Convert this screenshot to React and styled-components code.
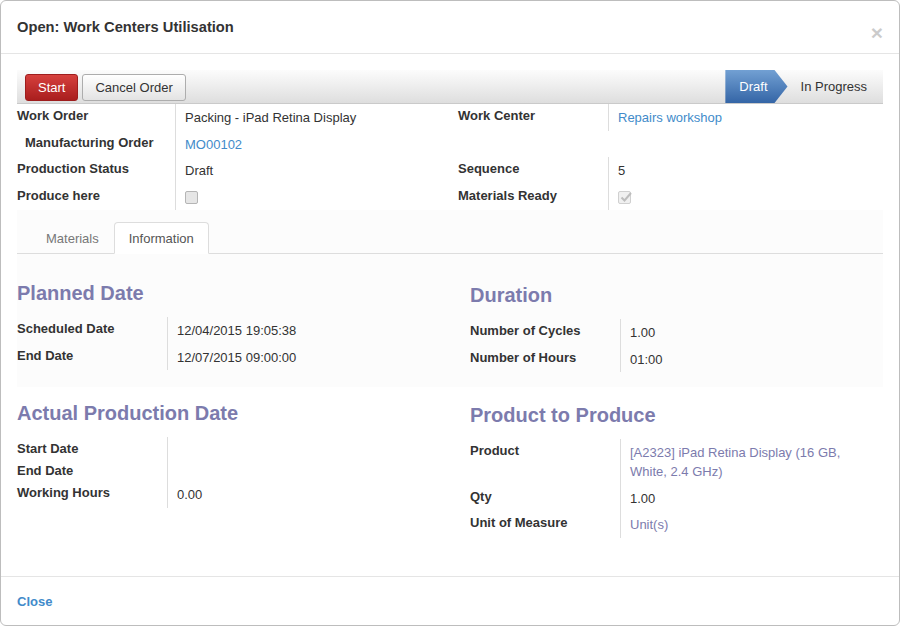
import React from 'react'
import styled, { createGlobalStyle } from 'styled-components'

const GlobalStyle = createGlobalStyle`
    html, body{
        margin:0;
        padding:0;
        background:#fff;
    }
    *{
        box-sizing:border-box;
    }
    body{
        font-family:"Liberation Sans", Arial, sans-serif;
        font-size:13px;
        line-height:1.42857;
        color:#333;
    }
`

const Modal = styled.div`
    display:flex;
    flex-direction:column;
    width:900px;
    height:626px;
    border:1px solid #bdbdbd;
    border-radius:6px;
    overflow:hidden;
    background:#fff;
`

const Header = styled.div`
    display:flex;
    align-items:center;
    justify-content:space-between;
    height:53px;
    padding:1px 16px 0;
    border-bottom:1px solid #e5e5e5;
    flex-shrink:0;
    .title{
        margin:0;
        font-size:14.7px;
        font-weight:bold;
        color:#333;
    }
    .close-x{
        margin-top:10px;
        font-size:21px;
        font-weight:bold;
        line-height:1;
        color:#000;
        opacity:0.2;
        cursor:pointer;
    }
`

const Body = styled.div`
    flex:1;
    padding:16px 16px 0 16px;
`

const StatusBar = styled.div`
    display:flex;
    align-items:center;
    justify-content:space-between;
    height:34px;
    padding:1px 0 0 8px;
    background:linear-gradient(to bottom, #fcfcfc, #dedede);
    border-bottom:1px solid #cacaca;
    .buttons{
        display:flex;
        gap:4px;
    }
    .steps{
        display:flex;
        align-self:stretch;
        height:33px;
        margin-top:-1px;
    }
`

const Button = styled.button`
    height:27px;
    padding:0 12px;
    font-family:inherit;
    font-size:13px;
    border-radius:3px;
    cursor:pointer;
    color:${p => p.$primary ? '#fff' : '#333'};
    border:1px solid ${p => p.$primary ? '#9e1d1d' : '#adadad'};
    background:${p => p.$primary
        ? 'linear-gradient(to bottom, #d6403d, #a91e1e)'
        : 'linear-gradient(to bottom, #ffffff, #e3e3e3)'};
`

const Step = styled.div`
    display:flex;
    align-items:center;
    height:100%;
    padding-top:2px;
    font-size:13px;
    ${p => p.$active ? `
        margin-left:2px;
        padding-left:14px;
        padding-right:20px;
        color:#fff;
        background:linear-gradient(to bottom, #72a0d3, #3465a6);
        clip-path:polygon(0 0, calc(100% - 13px) 0, 100% 50%, calc(100% - 13px) 100%, 0 100%);
    ` : `
        padding-left:13px;
        padding-right:16px;
        color:#333;
    `}
`

const FieldTable = styled.div`
    display:grid;
    grid-template-columns:${p => p.$cols};
    align-items:stretch;
`

const Label = styled.div`
    padding:3px 0 1px ${p => p.$indent ? '8px' : '0'};
    line-height:18px;
    font-weight:bold;
    color:#333;
`

const Value = styled.div`
    padding:5px 16px 3px 9px;
    border-left:1px solid ${p => p.$bare ? 'transparent' : '#dddddd'};
    color:#333;
    a{
        color:${p => p.$purple ? '#7c7bad' : '#428bca'};
        text-decoration:none;
    }
`

const Box = styled.span`
    display:inline-block;
    width:13px;
    height:13px;
    vertical-align:middle;
    margin-top:-2px;
    border:1px solid ${p => p.$checked ? '#d0d0d0' : '#b5b5b5'};
    border-radius:2px;
    background:${p => p.$checked ? '#f0f0f0' : '#e6e6e6'};
    position:relative;
    svg{
        position:absolute;
        left:0;
        top:-2px;
    }
`

const Notebook = styled.div`
    margin-top:0;
`

const TabBar = styled.div`
    display:flex;
    padding:12px 0 0 14px;
    background:#fcfcfc;
    border-bottom:1px solid #dddddd;
`

const Tab = styled.div`
    margin-bottom:-1px;
    padding:1px 14px 0;
    line-height:29px;
    border:1px solid ${p => p.$active ? '#dddddd' : 'transparent'};
    border-bottom-color:${p => p.$active ? '#fff' : 'transparent'};
    border-radius:4px 4px 0 0;
    background:${p => p.$active ? '#fff' : 'transparent'};
    color:${p => p.$active ? '#555' : '#777'};
    cursor:pointer;
`

const Section = styled.div`
    display:grid;
    grid-template-columns:453px 1fr;
    padding:${p => p.$first ? '28px 0 15px' : '15px 0 15px'};
    background:${p => p.$shade ? '#fcfcfc' : '#fff'};
`

const SectionCol = styled.div`
    padding-top:${p => p.$shift ? '2px' : '0'};
    h3{
        margin:0 0 13px;
        font-size:20px;
        line-height:22px;
        font-weight:bold;
        color:#7c7bad;
    }
`

const Footer = styled.div`
    display:flex;
    align-items:center;
    height:49px;
    padding:2px 16px 0;
    border-top:1px solid #e5e5e5;
    flex-shrink:0;
    a{
        font-weight:bold;
        color:#428bca;
        text-decoration:none;
        cursor:pointer;
    }
`

const CheckBox = ({ checked }) => (
    <Box $checked={checked}>
        {checked &&
            <svg width="14" height="14" viewBox="0 0 14 14">
                <path d="M2.5 7.5 L5.5 10.5 L12 3" fill="none" stroke="#bdbdbd" strokeWidth="2" />
            </svg>
        }
    </Box>
)

const SubGroup = ({ rows }) => (
    <FieldTable $cols="150px 1fr">
        {rows.map((r, i) => (
            <React.Fragment key={i}>
                <Label>{r.label}</Label>
                <Value $purple={r.purple}>{r.value}</Value>
            </React.Fragment>
        ))}
    </FieldTable>
)

export default function App() {
    return (
        <>
            <GlobalStyle />
            <Modal>
                <Header>
                    <h4 className='title'>Open: Work Centers Utilisation</h4>
                    <span className='close-x'>×</span>
                </Header>
                <Body>
                    <StatusBar>
                        <div className='buttons'>
                            <Button $primary>Start</Button>
                            <Button>Cancel Order</Button>
                        </div>
                        <div className='steps'>
                            <Step $active>Draft</Step>
                            <Step>In Progress</Step>
                        </div>
                    </StatusBar>

                    <FieldTable $cols="158px 283px 150px 1fr">
                        <Label>Work Order</Label>
                        <Value>Packing - iPad Retina Display</Value>
                        <Label>Work Center</Label>
                        <Value><a>Repairs workshop</a></Value>

                        <Label $indent>Manufacturing Order</Label>
                        <Value><a>MO00102</a></Value>
                        <Label></Label>
                        <Value $bare></Value>

                        <Label>Production Status</Label>
                        <Value>Draft</Value>
                        <Label>Sequence</Label>
                        <Value>5</Value>

                        <Label>Produce here</Label>
                        <Value><CheckBox /></Value>
                        <Label>Materials Ready</Label>
                        <Value><CheckBox checked /></Value>
                    </FieldTable>

                    <Notebook>
                        <TabBar>
                            <Tab>Materials</Tab>
                            <Tab $active>Information</Tab>
                        </TabBar>
                        <Section $first $shade>
                            <SectionCol>
                                <h3>Planned Date</h3>
                                <SubGroup rows={[
                                    { label: 'Scheduled Date', value: '12/04/2015 19:05:38' },
                                    { label: 'End Date', value: '12/07/2015 09:00:00' },
                                ]} />
                            </SectionCol>
                            <SectionCol $shift>
                                <h3>Duration</h3>
                                <SubGroup rows={[
                                    { label: 'Number of Cycles', value: '1.00' },
                                    { label: 'Number of Hours', value: '01:00' },
                                ]} />
                            </SectionCol>
                        </Section>
                        <Section>
                            <SectionCol>
                                <h3>Actual Production Date</h3>
                                <SubGroup rows={[
                                    { label: 'Start Date', value: null },
                                    { label: 'End Date', value: null },
                                    { label: 'Working Hours', value: '0.00' },
                                ]} />
                            </SectionCol>
                            <SectionCol $shift>
                                <h3>Product to Produce</h3>
                                <SubGroup rows={[
                                    { label: 'Product', value: <a>[A2323] iPad Retina Display (16 GB, White, 2.4 GHz)</a>, purple: true },
                                    { label: 'Qty', value: '1.00' },
                                    { label: 'Unit of Measure', value: <a>Unit(s)</a>, purple: true },
                                ]} />
                            </SectionCol>
                        </Section>
                    </Notebook>
                </Body>
                <Footer>
                    <a>Close</a>
                </Footer>
            </Modal>
        </>
    )
}
